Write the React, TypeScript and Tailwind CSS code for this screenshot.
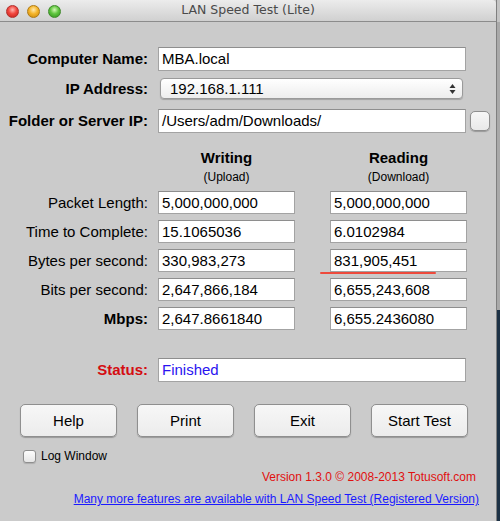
import React from "react";

const font = { fontFamily: '"Liberation Sans", Arial, Helvetica, sans-serif' };

function Field({ value, w, className = "" }: { value: string; w: string; className?: string }) {
  return (
    <div
      className={`${w} h-[24px] bg-white border border-[#a3a3a3] border-t-[#8e8e8e] flex items-center pl-[3px] text-[15px] leading-[18px] text-black overflow-hidden whitespace-nowrap ${className}`}
    >
      {value}
    </div>
  );
}

function Label({ children, bold = false, className = "" }: { children: React.ReactNode; bold?: boolean; className?: string }) {
  return (
    <div className={`w-[148px] text-right text-[15px] leading-[18px] ${bold ? "font-bold" : ""} ${className}`}>{children}</div>
  );
}

function DataRow({ label, a, b, bold = false, underline = false }: { label: string; a: string; b: string; bold?: boolean; underline?: boolean }) {
  return (
    <div className="flex items-center h-[23px]">
      <Label bold={bold}>{label}</Label>
      <div className="ml-[10px] w-[137px] h-[23px] bg-white border border-[#a3a3a3] border-t-[#8e8e8e] flex items-center pl-[3px] text-[15px] leading-[18px] overflow-hidden whitespace-nowrap">
        {a}
      </div>
      <div className="relative ml-[35px] w-[137px] h-[23px] bg-white border border-[#a3a3a3] border-t-[#8e8e8e] flex items-center pl-[3px] text-[15px] leading-[18px] whitespace-nowrap">
        {b}
        {underline && <div className="absolute left-[-11px] top-[22px] w-[116px] h-[2px] bg-[#ee4a3c] rounded-full" />}
      </div>
    </div>
  );
}

function Btn({ children }: { children: React.ReactNode }) {
  return (
    <div className="w-[97px] h-[33px] rounded-[5px] border border-[#8f8f8f] bg-gradient-to-b from-[#f7f7f7] to-[#ececec] shadow-[0_1px_1px_rgba(0,0,0,0.25)] flex items-center justify-center text-[15px] leading-[18px] text-black">
      {children}
    </div>
  );
}

export default function App() {
  return (
    <div className="w-[500px] h-[521px] flex overflow-hidden" style={font}>
      <div className="w-[497px] h-[521px] shrink-0 bg-[#cbcbcb] border-r border-[#7f7f7f] flex flex-col text-black">
        {/* title bar */}
        <div className="h-[22px] shrink-0 relative flex items-center justify-center bg-gradient-to-b from-[#ececec] to-[#d0d0d0] border-b border-[#8c8c8c] rounded-tr-[4px]">
          <div className="absolute left-[6px] top-[5px] flex gap-[8px]">
            <div className="w-[13px] h-[13px] rounded-full border border-[#b0302d] bg-[radial-gradient(circle_at_50%_35%,#ffb6b0_0%,#f2473f_45%,#c01e17_100%)]" />
            <div className="w-[13px] h-[13px] rounded-full border border-[#b07a12] bg-[radial-gradient(circle_at_50%_35%,#ffeab0_0%,#f5b52a_45%,#c6860a_100%)]" />
            <div className="w-[13px] h-[13px] rounded-full border border-[#3f8a2a] bg-[radial-gradient(circle_at_50%_35%,#d6f7b8_0%,#5fc63e_45%,#2f8d1c_100%)]" />
          </div>
          <div className="text-[#4a4a4a]" style={{ fontFamily: '"DejaVu Sans", "Liberation Sans", sans-serif', fontSize: "12.5px" }}>
            LAN Speed Test (Lite)
          </div>
        </div>

        {/* content */}
        <div className="flex flex-col pt-[25px]">
          <div className="flex items-center h-[24px]">
            <Label bold>Computer Name:</Label>
            <Field value="MBA.local" w="w-[308px]" className="ml-[10px]" />
          </div>

          <div className="flex items-center mt-[7px] h-[21px]">
            <Label bold>IP Address:</Label>
            <div className="ml-[12px] w-[303px] h-[21px] rounded-[4px] border border-[#9a9a9a] bg-gradient-to-b from-[#ffffff] to-[#ededed] shadow-[0_1px_1px_rgba(0,0,0,0.2)] flex items-center justify-between pl-[9px] pr-[6px] text-[15px] leading-[18px]">
              <span>192.168.1.111</span>
              <svg width="7" height="12" viewBox="0 0 7 12">
                <path d="M3.5 1 L6.5 5 L0.5 5 Z" fill="#333" />
                <path d="M3.5 11 L6.5 7 L0.5 7 Z" fill="#333" />
              </svg>
            </div>
          </div>

          <div className="flex items-center mt-[10px] h-[24px]">
            <Label bold>Folder or Server IP:</Label>
            <Field value="/Users/adm/Downloads/" w="w-[308px]" className="ml-[10px]" />
            <div className="ml-[4px] w-[20px] h-[20px] rounded-[5px] border border-[#8f8f8f] bg-gradient-to-b from-[#f7f7f7] to-[#e9e9e9] shadow-[0_1px_1px_rgba(0,0,0,0.25)]" />
          </div>

          {/* headers */}
          <div className="flex mt-[16px]">
            <div className="w-[158px]" />
            <div className="w-[137px] flex flex-col items-center">
              <div className="text-[15px] font-bold leading-[18px]">Writing</div>
              <div className="text-[12px] leading-[15px] mt-[3px]">(Upload)</div>
            </div>
            <div className="ml-[35px] w-[137px] flex flex-col items-center">
              <div className="text-[15px] font-bold leading-[18px]">Reading</div>
              <div className="text-[12px] leading-[15px] mt-[3px]">(Download)</div>
            </div>
          </div>

          <div className="flex flex-col gap-[6px] mt-[6px]">
            <DataRow label="Packet Length:" a="5,000,000,000" b="5,000,000,000" />
            <DataRow label="Time to Complete:" a="15.1065036" b="6.0102984" />
            <DataRow label="Bytes per second:" a="330,983,273" b="831,905,451" underline />
            <DataRow label="Bits per second:" a="2,647,866,184" b="6,655,243,608" />
            <DataRow label="Mbps:" a="2,647.8661840" b="6,655.2436080" bold />
          </div>

          <div className="flex items-center mt-[28px] h-[24px]">
            <Label bold className="text-[#d40d12]">Status:</Label>
            <Field value="Finished" w="w-[308px]" className="ml-[10px] !text-[#2a14f0]" />
          </div>

          <div className="flex mt-[22px] pl-[20px] gap-[20px]">
            <Btn>Help</Btn>
            <Btn>Print</Btn>
            <Btn>Exit</Btn>
            <Btn>Start Test</Btn>
          </div>

          <div className="flex items-center mt-[12px] pl-[23px] h-[14px]">
            <div className="w-[13px] h-[13px] rounded-[3px] border border-[#8f8f8f] bg-gradient-to-b from-[#fdfdfd] to-[#e6e6e6] shadow-[0_1px_1px_rgba(0,0,0,0.15)]" />
            <span className="ml-[5px] text-[12px] leading-[14px]">Log Window</span>
          </div>

          <div className="flex justify-end pr-[20px] mt-[6px] text-[12px] leading-[16px] text-[#e0100f]">
            Version 1.3.0 © 2008-2013 Totusoft.com
          </div>
          <div className="flex justify-end pr-[17px] mt-[6px] text-[12px] leading-[16px] text-[#1a1aff] underline">
            Many more features are available with LAN Speed Test (Registered Version)
          </div>
        </div>
      </div>
      <div className="flex-1 flex flex-col">
        <div className="h-[22px] bg-[#c4c4c4]" />
        <div className="h-[288px] bg-[#a9a9a9]" />
        <div className="flex-1 bg-[#1d3246]" />
      </div>
    </div>
  );
}
